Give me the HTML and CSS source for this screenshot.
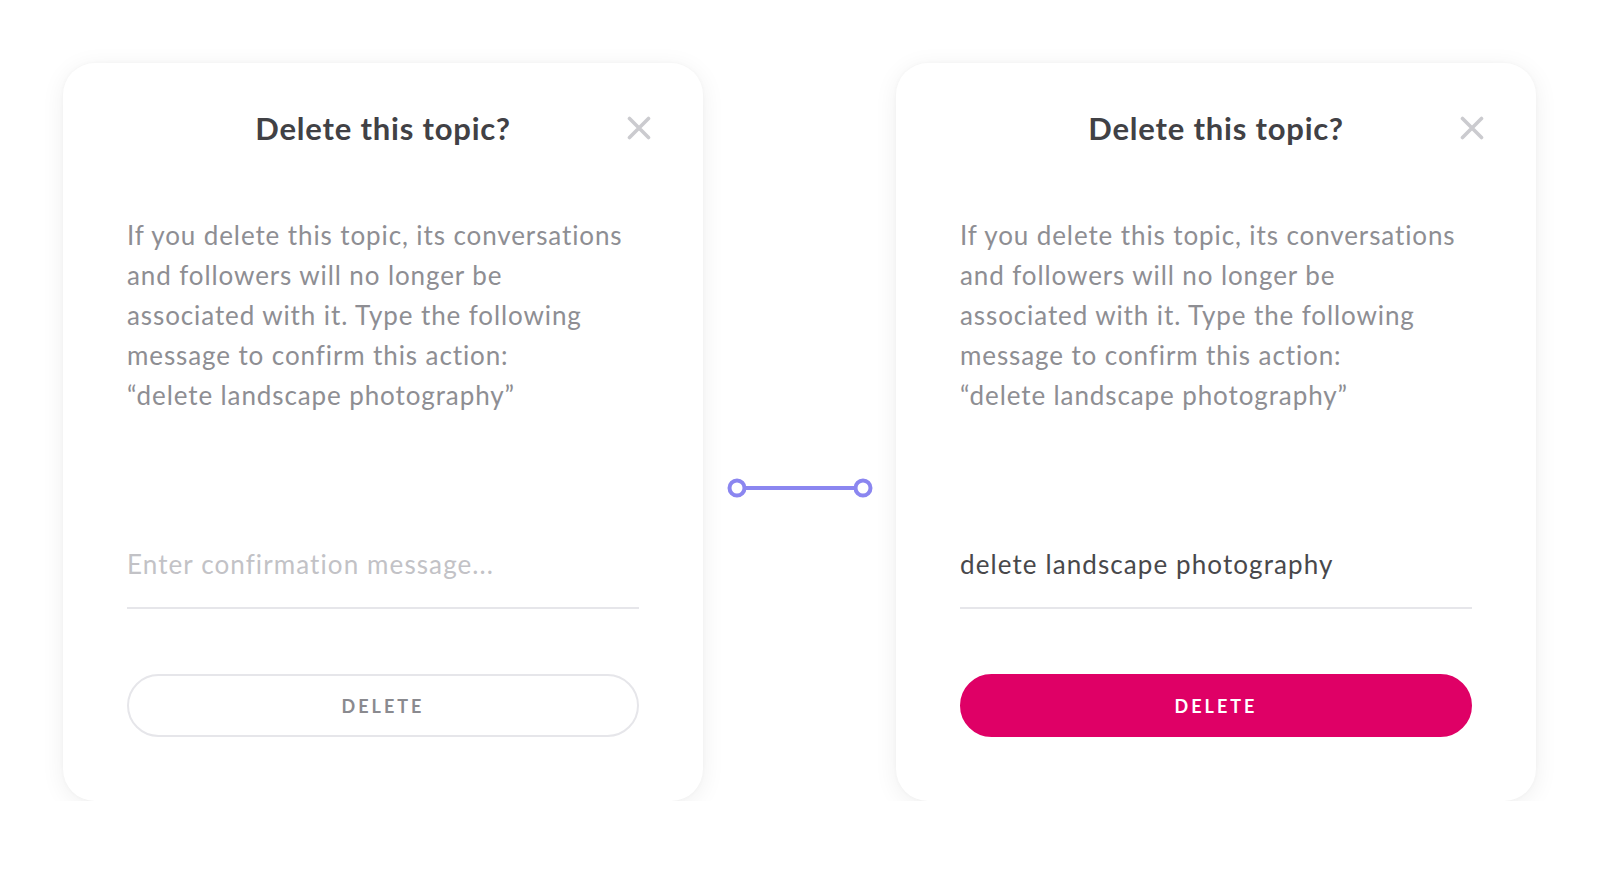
FILE: index.html
```html
<!DOCTYPE html>
<html lang="en">
<head>
  <meta charset="UTF-8" />
  <meta name="viewport" content="width=device-width, initial-scale=1.0"/>
  <title>Delete this topic?</title>
  <link rel="stylesheet" href="styles.css">
</head>
<body>
  <div class="stage">
    <div class="card">
      <div class="card-head">
        <h1>Delete this topic?</h1>
        <button class="close" aria-label="Close">
          <svg width="24" height="24" viewBox="0 0 24 24"><path d="M2.5 2.5 L21.5 21.5 M21.5 2.5 L2.5 21.5" stroke="#cbcbcf" stroke-width="3.6" stroke-linecap="round" fill="none"/></svg>
        </button>
      </div>
      <p class="desc">
        If you delete this topic, its conversations<br />
        and followers will no longer be<br />
        associated with it. Type the following<br />
        message to confirm this action:<br />
        “delete landscape photography”
      </p>
      <input class="confirm" type="text" placeholder="Enter confirmation message..." />
      <button class="delete">DELETE</button>
    </div>

    <div class="link">
      <svg width="150" height="24" viewBox="0 0 150 24">
        <line x1="16" y1="12" x2="134" y2="12" stroke="#8b86f0" stroke-width="4"/>
        <circle cx="12" cy="12" r="7.5" stroke="#8b86f0" stroke-width="4" fill="#fff"/>
        <circle cx="138" cy="12" r="7.5" stroke="#8b86f0" stroke-width="4" fill="#fff"/>
      </svg>
    </div>

    <div class="card">
      <div class="card-head">
        <h1>Delete this topic?</h1>
        <button class="close" aria-label="Close">
          <svg width="24" height="24" viewBox="0 0 24 24"><path d="M2.5 2.5 L21.5 21.5 M21.5 2.5 L2.5 21.5" stroke="#cbcbcf" stroke-width="3.6" stroke-linecap="round" fill="none"/></svg>
        </button>
      </div>
      <p class="desc">
        If you delete this topic, its conversations<br />
        and followers will no longer be<br />
        associated with it. Type the following<br />
        message to confirm this action:<br />
        “delete landscape photography”
      </p>
      <input class="confirm" type="text" value="delete landscape photography" />
      <button class="delete active">DELETE</button>
    </div>
  </div>
</body>
</html>
```

FILE: styles.css
```css
html, body {
  margin: 0;
  padding: 0;
  background: #fff;
  font-family: 'Lato', 'Noto Sans', sans-serif;
}

.stage {
  display: flex;
  align-items: flex-start;
  padding: 63px 64px 0 63px;
}

.card {
  width: 640px;
  box-sizing: border-box;
  padding: 45px 64px 64px;
  background: #fff;
  border-radius: 32px;
  box-shadow: 0 4px 24px rgba(0, 0, 0, 0.065), 0 0 4px rgba(0, 0, 0, 0.03);
  display: flex;
  flex-direction: column;
}

.card-head {
  position: relative;
  height: 40px;
  display: flex;
  justify-content: center;
  align-items: center;
}

h1 {
  margin: 0;
  font-size: 31px;
  line-height: 40px;
  font-weight: 700;
  letter-spacing: 0.8px;
  color: #414145;
}

.close {
  position: absolute;
  right: -12px;
  top: 8px;
  width: 24px;
  height: 24px;
  padding: 0;
  border: none;
  background: none;
  cursor: pointer;
}

.desc {
  margin: 67px 0 0;
  font-size: 26px;
  line-height: 40px;
  letter-spacing: 0.9px;
  color: #8e8e93;
}

.confirm {
  margin-top: 129px;
  height: 40px;
  padding: 0 0 23px;
  border: none;
  border-bottom: 2px solid #e6e6ea;
  font-family: inherit;
  font-size: 26px;
  letter-spacing: 1.1px;
  color: #48484b;
  outline: none;
  background: none;
}

.confirm::placeholder {
  color: #c2c2c6;
}

.delete {
  margin-top: 65px;
  height: 63px;
  border: 2px solid #e6e6ea;
  border-radius: 32px;
  background: #fff;
  font-family: inherit;
  font-size: 18px;
  font-weight: 700;
  letter-spacing: 3px;
  color: #8a8a8f;
  cursor: pointer;
}

.delete.active {
  border-color: #df0066;
  background: #df0066;
  color: #fff;
}

.link {
  width: 193px;
  display: flex;
  justify-content: center;
  margin-top: 413px;
}
```
